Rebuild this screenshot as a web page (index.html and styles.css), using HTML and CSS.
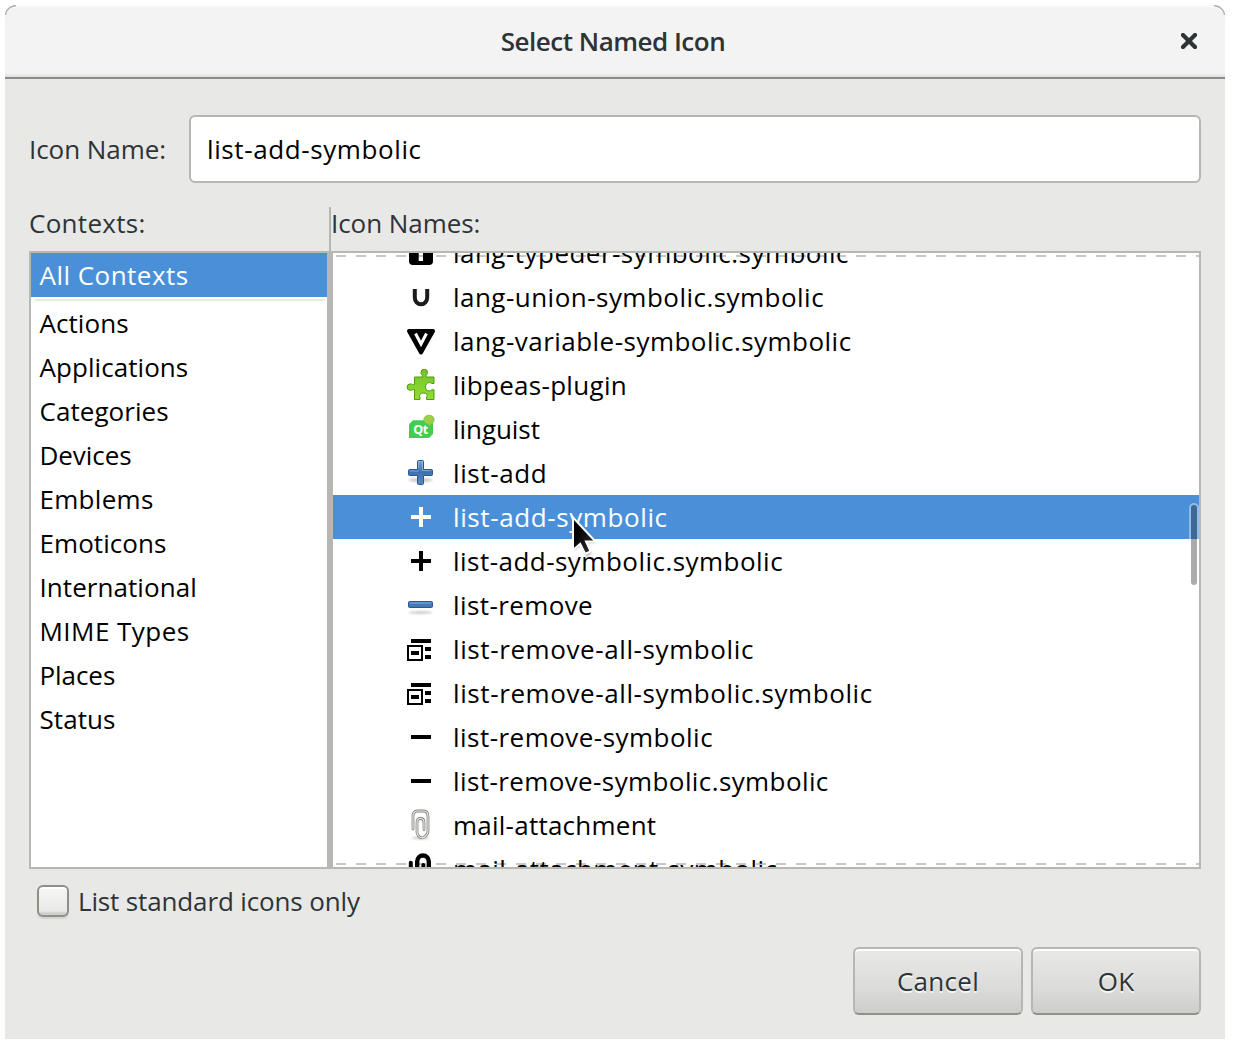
FILE: index.html
```html
<!DOCTYPE html>
<html lang="en">
<head>
<meta charset="utf-8">
<title>Select Named Icon</title>
<link rel="stylesheet" href="styles.css">
</head>
<body>
<svg class="defs" width="0" height="0" aria-hidden="true">
  <defs>
    <linearGradient id="leaf" x1="0" y1="0" x2="0" y2="1"><stop offset="0" stop-color="#76c22a"/><stop offset="1" stop-color="#8fdd35"/></linearGradient>
    <linearGradient id="steel" x1="0" y1="0" x2="0" y2="1"><stop offset="0" stop-color="#7fa5d2"/><stop offset=".5" stop-color="#3f70b0"/><stop offset="1" stop-color="#5a8ac4"/></linearGradient>
    <linearGradient id="ink" x1="0" y1="0" x2="1" y2="1"><stop offset=".3" stop-color="#000"/><stop offset="1" stop-color="#3a3a3a"/></linearGradient>
    <filter id="soft" x="-20%" y="-100%" width="140%" height="300%"><feGaussianBlur stdDeviation="1"/></filter>
    <symbol id="remove-all" viewBox="0 0 32 32"><path d="M6 6h20v4H6zM6 18h8v4H6zM20 14h6v4h-6zM20 22h6v4h-6z"/><path d="M3 13h14v14H3z" fill="none" stroke="currentColor" stroke-width="2"/></symbol>
  </defs>
</svg>
<main class="dialog">
  <svg class="corner corner-left" width="12" height="12" viewBox="0 0 12 12"><path d="M.5 10C1 5 5 1 11 .5" /></svg>
  <svg class="corner corner-right" width="12" height="12" viewBox="0 0 12 12"><path d="M11.500 10C11 5 7 1 1 .5"/></svg>
  <header class="titlebar">
    <h1 class="title">Select Named Icon</h1>
    <svg class="close" width="16" height="16" viewBox="0 0 16 16"><path d="M2 2l12 12M14 2L2 14"/></svg>
  </header>
  <div class="content">
    <div class="name-row">
      <label class="name-label ls0">Icon Name:</label>
      <div class="entry ls6">list-add-symbolic</div>
    </div>
    <div class="panes">
      <section class="contexts">
        <h2 class="heading ls3">Contexts:</h2>
        <ul class="list">
          <li class="item selected ls5">All Contexts</li>
          <li class="separator"></li>
          <li class="item ls1">Actions</li>
          <li class="item ls1">Applications</li>
          <li class="item ls1">Categories</li>
          <li class="item ls0">Devices</li>
          <li class="item ls3">Emblems</li>
          <li class="item ls1">Emoticons</li>
          <li class="item ls1">International</li>
          <li class="item ls5">MIME Types</li>
          <li class="item ls0">Places</li>
          <li class="item ls1">Status</li>
        </ul>
      </section>
      <div class="handle"></div>
      <section class="names">
        <h2 class="heading ls0">Icon Names:</h2>
        <div class="list icons">
          <div class="rows">
            <div class="row ls5"><svg class="icon" viewBox="0 0 32 32"><rect x="4" y="4" width="24" height="24" rx="4"/><path d="M8 8h16v4h-6v12h-4.300V12H8z" fill="#fff"/></svg>lang-typeder-symbolic.symbolic</div>
            <div class="row ls5"><svg class="icon" viewBox="0 0 32 32"><path d="M9.800 8v8.500a6.200 6.800 0 0 0 12.400 0V8" fill="none" stroke="#1a1a1a" stroke-width="4"/></svg>lang-union-symbolic.symbolic</div>
            <div class="row ls5"><svg class="icon" viewBox="0 0 32 32"><path d="M4 6h24L16 27.500z" fill="#000" stroke="#000" stroke-width="4" stroke-linejoin="round"/><path d="M10.500 8.500l5.500 10.500 5.500-10.500" fill="none" stroke="#fff" stroke-width="3"/></svg>lang-variable-symbolic.symbolic</div>
            <div class="row ls3"><svg class="icon" viewBox="0 0 32 32"><path d="M9.500 8h8c.5-2-1.500-2.500-1.500-4.500a3.300 3.300 0 0 1 6.600 0C22.600 5.500 20.500 6 21 8h8v6.500h-2.500c-1-1.500-6-1.500-6 3.300s5 4.800 6 3H29v9.700h-7.500v-2.500c1.500-1 .5-4-3-4s-5 3-3.500 4v2.500H9.500v-10c-1-.5-2.300.8-4.200.8a3.200 3.200 0 0 1 0-6.400c1.900 0 3.200 1.300 4.200.6z" fill="url(#leaf)" stroke="#4f9a0c" stroke-width="1"/></svg>libpeas-plugin</div>
            <div class="row ls0"><svg class="icon" viewBox="0 0 32 32"><path d="M8 7.300h20V21l-4 4H4V11.300z" fill="#41cd52"/><ellipse cx="24" cy="6.700" rx="5.200" ry="4.500" fill="#9dcf47" stroke="#8cae66" stroke-width=".8"/><path d="M23 10.500l2 2.500 1-3" fill="#9dcf47"/><text x="8.200" y="21" class="qt">Qt</text></svg>linguist</div>
            <div class="row ls6"><svg class="icon" viewBox="0 0 32 32"><ellipse cx="15.500" cy="23" rx="12" ry="2" fill="#aaa" opacity=".6" filter="url(#soft)"/><path d="M13.500 3.500h4q1 0 1 1v8h8q1 0 1 1v4q0 1-1 1h-8v8q0 1-1 1h-4q-1 0-1-1v-8h-8q-1 0-1-1v-4q0-1 1-1h8v-8q0-1 1-1z" fill="url(#steel)" stroke="#2b5792"/><path d="M13.500 11V4.500h4v9h8M5 14h8.500" fill="none" stroke="#a9c4e4" opacity=".55"/></svg>list-add</div>
            <div class="row selected ls6"><svg class="icon" viewBox="0 0 32 32"><path d="M14 6h4v8h8v4h-8v8h-4v-8H6v-4h8z"/></svg>list-add-symbolic</div>
            <div class="row ls5"><svg class="icon" viewBox="0 0 32 32"><path d="M14 6h4v8h8v4h-8v8h-4v-8H6v-4h8z"/></svg>list-add-symbolic.symbolic</div>
            <div class="row ls4"><svg class="icon" viewBox="0 0 32 32"><ellipse cx="15.500" cy="23.500" rx="12" ry="1.500" fill="#aaa" opacity=".6" filter="url(#soft)"/><rect x="3.500" y="12.500" width="24" height="6" rx="1" fill="#4678b6" stroke="#2b5792"/><path d="M5 14h21" stroke="#88abd5" stroke-width="1"/></svg>list-remove</div>
            <div class="row ls6"><svg class="icon"><use href="#remove-all"/></svg>list-remove-all-symbolic</div>
            <div class="row ls6"><svg class="icon"><use href="#remove-all"/></svg>list-remove-all-symbolic.symbolic</div>
            <div class="row ls5"><svg class="icon" viewBox="0 0 32 32"><path d="M6 14h20v4H6z"/></svg>list-remove-symbolic</div>
            <div class="row ls4"><svg class="icon" viewBox="0 0 32 32"><path d="M6 14h20v4H6z"/></svg>list-remove-symbolic.symbolic</div>
            <div class="row ls2"><svg class="icon" viewBox="0 0 32 32"><ellipse cx="15.500" cy="29" rx="9" ry="1.500" fill="#aaa" opacity=".6" filter="url(#soft)"/><g fill="none" stroke-linecap="round"><path d="M8 20V7.500Q8 2 12.500 2h6Q23 2 23 7.500V22q0 3-3 5.500-3.500 3-6.500-.5-1.500-2-1.500-4v-9q0-4.500 3.500-4.500t3.500 4v7" stroke="#85867f" stroke-width="2.800"/><path d="M8 20V7.500Q8 2 12.500 2h6Q23 2 23 7.500V22q0 3-3 5.500-3.500 3-6.500-.5-1.500-2-1.500-4v-9q0-4.500 3.500-4.500t3.500 4v7" stroke="#eeeeec" stroke-width="1.100"/></g></svg>mail-attachment</div>
            <div class="row ls4"><svg class="icon" viewBox="0 0 32 32"><path d="M5.800 22V9.800M18.300 22V12" fill="none" stroke="#000" stroke-width="4" stroke-linecap="round"/><path d="M12.200 22V8.500a5.800 6 0 0 1 11.600 0V22" fill="none" stroke="#000" stroke-width="4.400"/></svg>mail-attachment-symbolic</div>
          </div>
          <div class="overflow-mark mark-top"></div>
          <div class="overflow-mark mark-bottom"></div>
          <div class="scrollbar"></div>
        </div>
      </section>
    </div>
    <label class="check-row"><span class="checkbox"></span>List standard icons only</label>
    <footer class="actions">
      <button class="button">Cancel</button>
      <button class="button">OK</button>
    </footer>
  </div>
  <svg class="pointer" width="34" height="46" viewBox="0 0 34 46">
    <path d="M5 4v33l6.300-5.800 5.200 10.300q.8 1.500 2.400.7l2.400-1.200q1.500-.8.800-2.400L17.500 29H27z" fill="#777" opacity=".45" filter="url(#soft)"/>
    <path d="M4 3.500v32.500l7.200-6.200 4.300 8.700q.7 1.300 2 .7l2.800-1.400q1.200-.7.600-2L17 27.500h9.500z" fill="url(#ink)" stroke="#fff" stroke-width="2"/>
  </svg>
</main>
</body>
</html>
```
FILE: styles.css
```css
* { box-sizing: border-box; }
body {
  margin: 0;
  padding: 5px 9px 9px 5px;
  background: #fff;
  font: 26px/44px "Open Sans", "Noto Sans", sans-serif;
  color: #2e3436;
}
h1, h2, ul { margin: 0; padding: 0; font: inherit; list-style: none; }
.defs { position: absolute; }

.ls0 { letter-spacing: -.06px; }
.ls1 { letter-spacing: .06px; }
.ls2 { letter-spacing: .24px; }
.ls3 { letter-spacing: .3px; }
.ls4 { letter-spacing: .4px; }
.ls5 { letter-spacing: .47px; }
.ls6 { letter-spacing: .6px; }

.dialog {
  position: relative;
  width: 1220px;
  height: 1034px;
  background: #e8e8e6;
  border-radius: 14px 14px 0 0;
}
.corner { position: absolute; top: 0; fill: none; stroke: #b0b0ae; stroke-width: 1.4; }
.corner-left { left: 0; }
.corner-right { right: 0; }
.titlebar {
  height: 74px;
  display: grid;
  grid-template-columns: 1fr auto 1fr;
  align-items: center;
  padding: 0 28px 2px 24px;
  border-top: 2px solid #fafafa;
  border-bottom: 2px solid #8b8e85;
  border-radius: 14px 14px 0 0;
  background: linear-gradient(#f3f3f3 0 66px, #dededd 70px);
}
.title {
  grid-column: 2;
  font-size: 26px;
  font-weight: 650;
  letter-spacing: -.5px;
}
.close {
  justify-self: end;
  stroke: #2e3436;
  stroke-width: 4.2;
  stroke-linecap: square;
}
.content { padding: 36px 24px 24px; }

.name-row { display: flex; align-items: center; height: 68px; }
.name-label { width: 160px; }
.entry {
  flex: 1;
  height: 68px;
  padding-left: 16px;
  border: 2px solid #b6b6b3;
  border-radius: 6px;
  background: #fff;
  color: #000;
  line-height: 64px;
}

.panes { display: flex; height: 662px; margin-top: 24px; }
.contexts { width: 300px; }
.handle { width: 2px; background: #b6b6b3; }
.names { flex: 1; }
.heading { height: 44px; line-height: 33px; }
.list {
  height: 618px;
  border: 2px solid #b6b8b1;
  background: #fff;
  color: #000;
  overflow: hidden;
}
.item { height: 44px; padding-left: 8.500px; }
.selected { background: #4a90d9; color: #fff; }
.separator { height: 4px; margin: 0 2px 0 4px; border-top: 2px solid #fff; background: #e8e8e6; }

.icons { position: relative; }
.rows { margin-top: -22px; }
.row {
  display: flex;
  align-items: center;
  gap: 16px;
  height: 44px;
  padding-left: 72px;
  white-space: nowrap;
}
.icon { width: 32px; height: 32px; flex: none; fill: currentColor; }
.qt { font: 700 12.5px "Open Sans", sans-serif; fill: #fff; letter-spacing: -.3px; }
.overflow-mark {
  position: absolute;
  left: 3px;
  right: 0;
  height: 2px;
  background: repeating-linear-gradient(90deg, rgba(0, 0, 0, .22) 0 10px, transparent 10px 20px);
}
.mark-top { top: 2px; }
.mark-bottom { bottom: 2px; }
.scrollbar {
  position: absolute;
  top: 252px;
  right: 2px;
  width: 6px;
  height: 80px;
  border-radius: 3px;
  background: rgba(46, 52, 54, .41);
  box-shadow: 0 0 0 2px rgba(255, 255, 255, .4);
}

.check-row {
  display: flex;
  align-items: center;
  gap: 9px;
  width: max-content;
  height: 32px;
  margin: 16px 0 0 8px;
  letter-spacing: -.14px;
}
.checkbox {
  width: 32px;
  height: 32px;
  border: 2px solid #8f9189;
  border-radius: 6px;
  background: linear-gradient(#f6f6f6, #e9e9e8 24px, #cfcfcb 26px);
  box-shadow: 0 2px 1px #d3d3d0, inset 0 2px #fff;
}
.actions { display: flex; justify-content: flex-end; gap: 8px; margin-top: 30px; }
.button {
  width: 170px;
  height: 68px;
  padding: 0;
  border: 2px solid #b6b6b3;
  border-bottom-color: #8f9189;
  border-radius: 6px;
  background: linear-gradient(#e8e8e7, #dcdcdb 60%, #cdcdca);
  box-shadow: inset 0 2px #fff;
  font: inherit;
  letter-spacing: .3px;
  color: #2e3436;
  text-shadow: 0 2px #f6f6f5;
}
.pointer { position: absolute; left: 564px; top: 509px; }
```
